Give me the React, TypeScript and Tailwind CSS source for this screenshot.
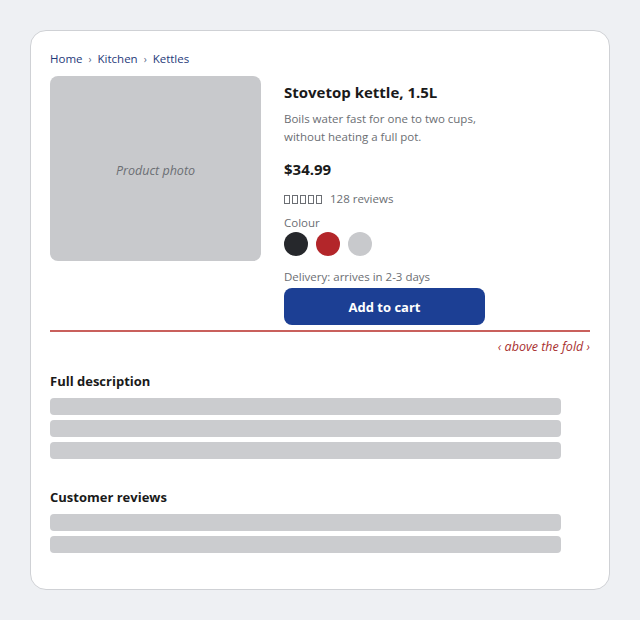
import React from 'react'

// --- Product page wireframe ---

const crumbs = ['Home', 'Kitchen', 'Kettles']
const swatches = ['bg-[#26282c]', 'bg-[#b3262a]', 'bg-[#c8c9cc]']

const Bar = () => <div className="h-[17px] w-[511px] rounded-[4px] bg-[#cbcccf]" />

const Stars = () => (
  <span className="flex gap-[2px]">
    {[0, 1, 2, 3, 4].map((i) => (
      <span key={i} className="inline-block h-[9px] w-[6px] border border-[#6b6e73]" />
    ))}
  </span>
)

export default function App() {
  return (
    <div
      className="min-h-[620px] w-[640px] bg-[#eef0f3] p-[30px]"
      style={{ fontFamily: '"Open Sans", "Noto Sans", sans-serif' }}
    >
      <div className="h-[560px] rounded-[16px] border border-[#cfd1d5] bg-white px-[19px] pt-[19px]">
        {/* breadcrumb */}
        <nav className="flex items-center gap-[6px] text-[11.5px] leading-[18px] text-[#1f3a7a]">
          {crumbs.map((c, i) => (
            <React.Fragment key={c}>
              {i > 0 && <span className="text-[10px] text-[#5a6a8a]">›</span>}
              <span>{c}</span>
            </React.Fragment>
          ))}
        </nav>

        {/* top section */}
        <div className="mt-[8px] flex gap-[23px]">
          <div className="flex h-[185px] w-[211px] items-center justify-center rounded-[8px] bg-[#c8c9cc] pt-[6px] text-[12.5px] italic text-[#6b6e73]">
            Product photo
          </div>
          <div className="w-[201px]">
            <h1 className="mt-[5px] text-[15px] font-bold leading-[22px] text-[#1a1a1a]">
              Stovetop kettle, 1.5L
            </h1>
            <p className="mt-[7px] pr-[4px] text-[11.5px] leading-[18px] text-[#6b6e73]">
              Boils water fast for one to two cups, without heating a full pot.
            </p>
            <div className="mt-[12px] text-[15px] font-bold leading-[22px] text-[#1a1a1a]">$34.99</div>
            <div className="mt-[10px] flex items-center gap-[8px] text-[11.5px] leading-[18px] text-[#6b6e73]">
              <Stars />
              <span>128 reviews</span>
            </div>
            <div className="mt-[6px] text-[11.5px] leading-[18px] text-[#6b6e73]">Colour</div>
            <div className="flex gap-[8px]">
              {swatches.map((s) => (
                <span key={s} className={`h-[24px] w-[24px] rounded-full ${s}`} />
              ))}
            </div>
            <div className="mt-[12px] text-[11.5px] leading-[18px] text-[#6b6e73]">Delivery: arrives in 2-3 days</div>
            <button className="mt-[2px] h-[37px] w-[201px] rounded-[8px] bg-[#1c3f94] pt-[3px] text-[13px] font-bold text-white">
              Add to cart
            </button>
          </div>
        </div>

        {/* fold marker */}
        <div className="mt-[5px] h-[2px] bg-[#c9605c]" />
        <div className="mt-[6px] text-right text-[12.5px] italic leading-[18px] text-[#a8302f]">‹ above the fold ›</div>

        <h2 className="mt-[16px] text-[13px] font-bold leading-[18px] text-[#1a1a1a]">Full description</h2>
        <div className="mt-[8px] flex flex-col gap-[5px]">
          <Bar />
          <Bar />
          <Bar />
        </div>

        <h2 className="mt-[29px] text-[13px] font-bold leading-[18px] text-[#1a1a1a]">Customer reviews</h2>
        <div className="mt-[8px] flex flex-col gap-[5px]">
          <Bar />
          <Bar />
        </div>
      </div>
    </div>
  )
}
